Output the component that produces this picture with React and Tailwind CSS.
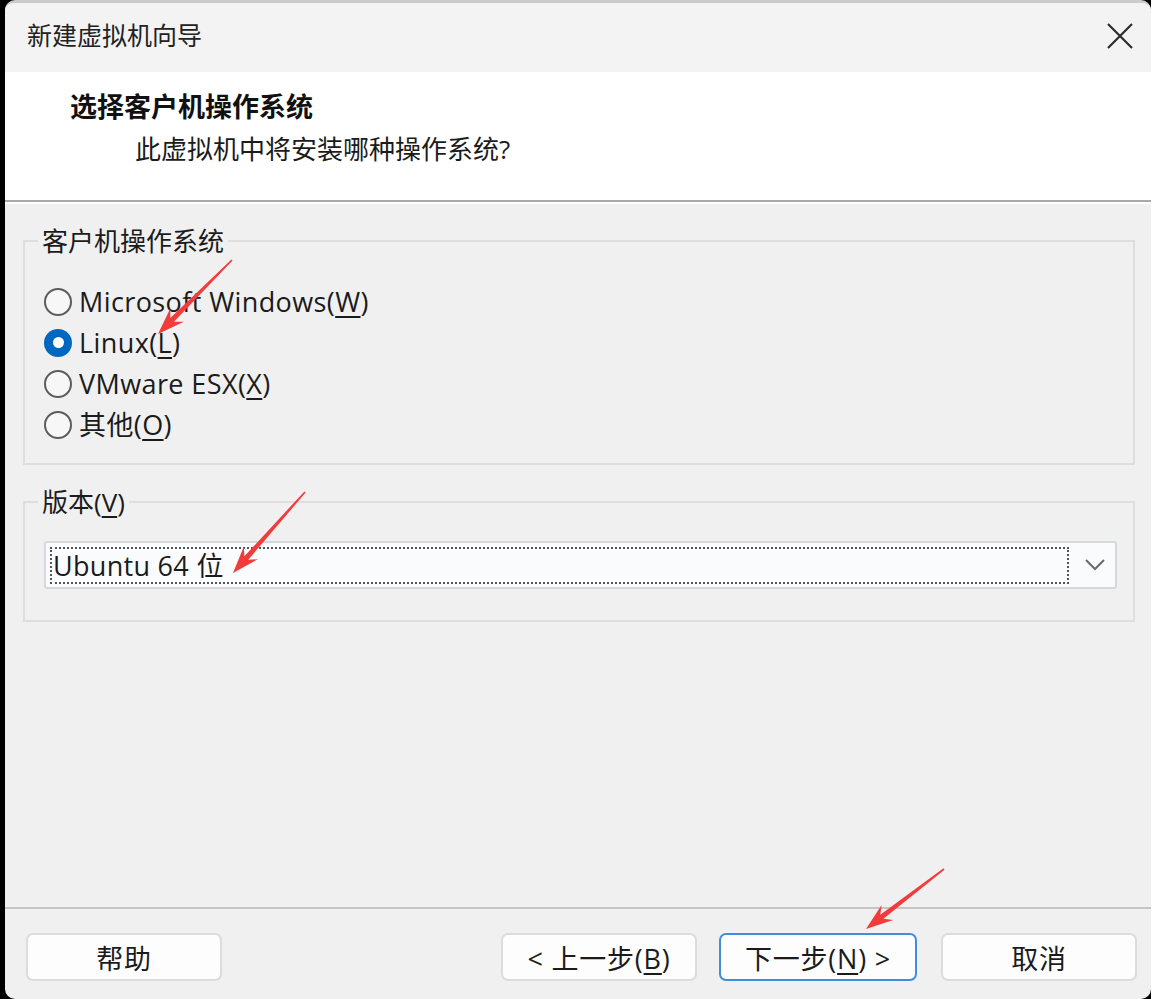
import React from 'react';

const FONT = { fontFamily: '"Open Sans", "Noto Sans CJK SC", sans-serif' };

// red annotation arrow, computed from tail to tip
const Arrow = ({ x1, y1, x2, y2 }) => {
  const dx = x2 - x1;
  const dy = y2 - y1;
  const len = Math.hypot(dx, dy);
  const ux = dx / len;
  const uy = dy / len;
  const nx = -uy;
  const ny = ux;
  const p = (bx, by, d, w) => `${bx - ux * d + nx * w},${by - uy * d + ny * w}`;
  const pts = [
    p(x1, y1, 0, 0.8),
    p(x2, y2, 20, 2.6),
    p(x2, y2, 27, 9.5),
    `${x2},${y2}`,
    p(x2, y2, 27, -9.5),
    p(x2, y2, 20, -2.6),
    p(x1, y1, 0, -0.8),
  ].join(' ');
  return <polygon points={pts} fill="#f23b3b" />;
};

const U = ({ children }) => <span className="underline underline-offset-[4px] decoration-[1.5px]">{children}</span>;

const Radio = ({ checked, children }) => (
  <div className="flex items-center h-[41px]">
    {checked ? (
      <span className="w-[28px] h-[28px] rounded-full bg-[#0067c0] flex items-center justify-center">
        <span className="w-[11px] h-[11px] rounded-full bg-white" />
      </span>
    ) : (
      <span className="w-[28px] h-[28px] rounded-full border-2 border-[#5c5c5c] bg-[#f7f7f7]" />
    )}
    <span className="ml-[7px] text-[27px] tracking-[0.4px] leading-none text-[#1b1b1b]">{children}</span>
  </div>
);

const Btn = ({ children, primary, className = '' }) => (
  <button
    className={
      'h-[48px] w-[196px] rounded-[7px] bg-[#fdfdfd] text-[27px] tracking-[0.8px] leading-none pt-[3px] text-[#1b1b1b] flex items-center justify-center ' +
      (primary ? 'border-2 border-[#3f8ddb] ' : 'border-2 border-[#dcdcdc] ') +
      className
    }
  >
    {children}
  </button>
);

export default function App() {
  return (
    <div className="relative w-[1170px] h-[999px] bg-white flex" style={FONT}>
      <div className="w-[1151px] h-full bg-black pl-[5px]">
        <div className="h-full bg-[#f0f0f0] rounded-[10px] overflow-hidden border-t-[3px] border-[#cbcbcb] flex flex-col">
          {/* title bar */}
          <div className="h-[69px] bg-[#f3f3f3] flex items-center justify-between pl-[22px] pr-[17px] pb-[3px]">
            <span className="text-[25px] text-[#222]">新建虚拟机向导</span>
            <svg width="28" height="28" viewBox="0 0 28 28">
              <path d="M2 2 L26 26 M26 2 L2 26" stroke="#2b2b2b" strokeWidth="2.2" />
            </svg>
          </div>

          {/* header */}
          <div className="h-[128px] bg-white flex flex-col pl-[65px] pt-[18px]">
            <span className="text-[27px] font-bold leading-[34px] text-[#111]">选择客户机操作系统</span>
            <span className="ml-[65px] mt-[8px] text-[26px] leading-[34px] text-[#1b1b1b]">此虚拟机中将安装哪种操作系统?</span>
          </div>
          <div className="h-[2px] bg-[#a8a8a8]" />
          <div className="h-[2px] bg-white" />

          {/* body */}
          <div className="flex-1 flex flex-col pl-[18px] pr-[16px] pt-[20px]">
            <fieldset className="border-2 border-[#dedede] pl-[19px] pr-[16px] pb-[18px]">
              <legend className="-ml-[6px] px-[4px] text-[26px] leading-[34px] text-[#1b1b1b]">客户机操作系统</legend>
              <div className="pt-[23px] flex flex-col">
                <Radio>Microsoft Windows(<U>W</U>)</Radio>
                <Radio checked>Linux(<U>L</U>)</Radio>
                <Radio>VMware ESX(<U>X</U>)</Radio>
                <Radio>其他(<U>O</U>)</Radio>
              </div>
            </fieldset>

            <fieldset className="mt-[20px] border-2 border-[#dedede] pl-[19px] pr-[16px] pb-[31px]">
              <legend className="-ml-[6px] px-[4px] text-[26px] leading-[34px] text-[#1b1b1b]">
                版本(<U>V</U>)
              </legend>
              <div className="mt-[22px] h-[48px] bg-[#fafbfd] border-2 border-[#d6d8dc] rounded-[3px] flex items-center pl-[4px] pr-[10px]">
                <div className="flex-1 h-[37px] border-2 border-dotted border-[#555] flex items-center pl-[1px]">
                  <span className="text-[27px] tracking-[0.3px] leading-none text-[#1b1b1b]">Ubuntu 64 位</span>
                </div>
                <svg className="ml-[16px]" width="20" height="12" viewBox="0 0 20 12">
                  <path d="M1 1 L10 10 L19 1" fill="none" stroke="#6a6a6a" strokeWidth="2" />
                </svg>
              </div>
            </fieldset>

            <div className="flex-1" />
          </div>

          {/* footer */}
          <div className="h-[2px] bg-[#c4c4c4] -mt-[2px]" />
          <div className="h-[90px] flex pt-[24px] pl-[21px] pr-[14px]">
            <Btn>帮助</Btn>
            <div className="flex-1" />
            <Btn>&lt; 上一步(<U>B</U>)</Btn>
            <Btn primary className="ml-[22px] w-[198px]">下一步(<U>N</U>) &gt;</Btn>
            <Btn className="ml-[24px]">取消</Btn>
          </div>
        </div>
      </div>

      <svg className="absolute inset-0 pointer-events-none" width="1170" height="999">
        <Arrow x1={232} y1={260} x2={158} y2={334} />
        <Arrow x1={305} y1={492} x2={233} y2={573} />
        <Arrow x1={944} y1={869} x2={866} y2={929} />
      </svg>
    </div>
  );
}
